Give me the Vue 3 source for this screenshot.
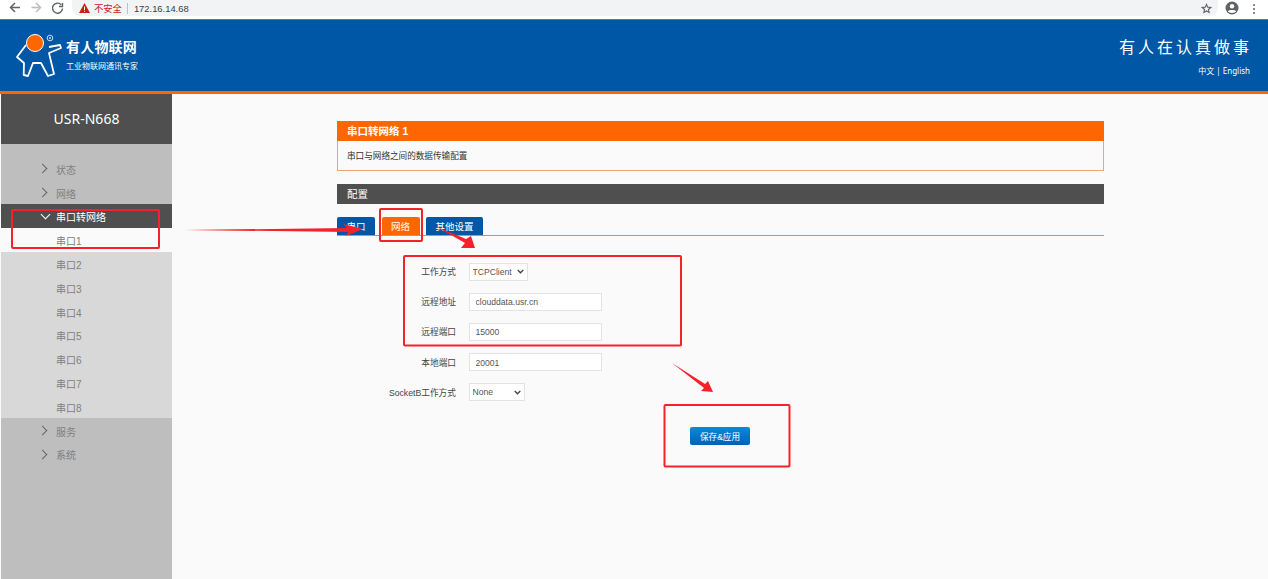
<script setup>
const menuTop = ['状态', '网络']
const ports = ['串口2', '串口3', '串口4', '串口5', '串口6', '串口7', '串口8']
const menuBottom = ['服务', '系统']
</script>

<template>
  <div class="page">
    <!-- browser toolbar -->
    <div class="chrome">
      <svg class="nav" width="72" height="16" viewBox="0 0 72 16" fill="none">
        <path d="M20 7.500H11M15 3L10.500 7.500 15 12" stroke="#5f6368" stroke-width="1.500" />
        <path d="M31.500 7.500h9M36 3L40.500 7.500 36 12" stroke="#b9bcc0" stroke-width="1.500" />
        <path d="M61.200 4.800A5 5 0 1 0 62.500 8.500M62.500 3v3.500h-3.500" stroke="#5f6368" stroke-width="1.400" />
      </svg>
      <div class="omnibox">
        <svg width="11" height="10" viewBox="0 0 11 10"><path d="M5.500 0L11 10H0z" fill="#c5221f" /><path d="M5 3.500h1V7H5zM5 7.800h1v1H5z" fill="#fff" /></svg>
        <span class="unsafe">不安全</span>
        <i class="sep"></i>
        <span class="url">172.16.14.68</span>
        <svg class="star" width="11" height="11" viewBox="0 0 24 24" fill="none"><path d="M12 3l2.700 6.100 6.600.7-5 4.400 1.400 6.500-5.700-3.300-5.700 3.300 1.400-6.500-5-4.400 6.600-.7z" stroke="#5f6368" stroke-width="2.400" /></svg>
      </div>
      <svg class="account" width="14" height="14" viewBox="0 0 14 14"><circle cx="7" cy="7" r="6.500" fill="#5f6368" /><circle cx="7" cy="5.200" r="2.200" fill="#fff" /><path d="M2.800 10.500C4 8.600 10 8.600 11.200 10.500 9.500 12.400 4.500 12.400 2.800 10.500z" fill="#fff" /></svg>
      <div class="dots"><i></i><i></i><i></i></div>
    </div>

    <header class="top">
      <div class="brand">
        <svg class="logo" width="52" height="50" viewBox="0 0 52 50" fill="none">
          <path d="M12 15L3 27l7 6-.3 12 4.300 1 5-13h8l7 13 6-2-5-21 12-5-1-3-11 2" stroke="#fff" stroke-width="1.800" stroke-linejoin="round" />
          <circle cx="21" cy="13" r="8.500" fill="#ff6600" stroke="#fff" stroke-width="1" />
          <circle cx="36" cy="8" r="2.800" stroke="#cfe0f0" stroke-width="1" />
          <circle cx="36" cy="8" r="1" fill="#cfe0f0" />
        </svg>
        <div class="brand-text">
          <div class="brand-name">有人物联网</div>
          <div class="brand-sub">工业物联网通讯专家</div>
        </div>
      </div>
      <div class="slogan">
        <div class="motto">有人在认真做事</div>
        <div class="lang">中文 | English</div>
      </div>
    </header>

    <div class="body">
      <aside class="side">
        <div class="model">USR-N668</div>
        <ul class="menu">
          <li v-for="m in menuTop" :key="m" class="item"><i class="chev"></i>{{ m }}</li>
          <li class="item open"><i class="chev down"></i>串口转网络</li>
          <li class="sub active">串口1</li>
          <li v-for="p in ports" :key="p" class="sub">{{ p }}</li>
          <li v-for="m in menuBottom" :key="m" class="item"><i class="chev"></i>{{ m }}</li>
        </ul>
      </aside>

      <main class="main">
        <section class="notice">
          <h2>串口转网络 1</h2>
          <p>串口与网络之间的数据传输配置</p>
        </section>
        <div class="bar">配置</div>
        <div class="tabs">
          <span class="tab">串口</span>
          <span class="tab on">网络</span>
          <span class="tab">其他设置</span>
        </div>
        <form class="form" @submit.prevent>
          <label>工作方式</label>
          <select class="sel-a"><option>TCPClient</option></select>
          <label>远程地址</label>
          <input value="clouddata.usr.cn" />
          <label>远程端口</label>
          <input value="15000" />
          <label>本地端口</label>
          <input value="20001" />
          <label>SocketB工作方式</label>
          <select class="sel-b"><option>None</option></select>
        </form>
        <div class="actions"><button class="save">保存&amp;应用</button></div>
      </main>
    </div>

    <!-- red annotations drawn on top of the screenshot -->
    <svg class="marks" width="1268" height="579" viewBox="0 0 1268 579" fill="none">
      <g stroke="#f5222a" stroke-width="2">
        <rect x="12" y="210" width="147" height="38" rx="1" />
        <rect x="380" y="209" width="42" height="32" rx="1" />
        <rect x="404" y="256" width="277" height="89.500" rx="1" />
        <rect x="664.500" y="405" width="125" height="61.500" rx="1" />
      </g>
      <g fill="#f5222a">
        <polygon points="184,230 347,228 343,224 363,229 346,236 348,232" />
        <polygon points="437,227 466,239 471,236 475,248 461,248 465,243" />
        <polygon points="672,363 705,384 708,381 713,392 701,391 704,388" />
      </g>
    </svg>
  </div>
</template>

<style scoped>
.page {
  position: relative;
  width: 1268px;
  height: 579px;
  overflow: hidden;
  background: #fafafa;
  font-family: "Liberation Sans", "Noto Sans CJK SC", sans-serif;
  display: flex;
  flex-direction: column;
}
.chrome {
  height: 19px;
  flex: none;
  background: #fff;
  display: flex;
  align-items: flex-start;
}
.nav {
  flex: none;
}
.omnibox {
  width: 1146px;
  height: 16px;
  background: #f1f3f4;
  border-radius: 0 0 8px 8px;
  display: flex;
  align-items: center;
  padding-left: 7px;
  box-sizing: border-box;
}
.unsafe {
  color: #c5221f;
  font-size: 9.300px;
  margin-left: 4px;
}
.sep {
  width: 1px;
  height: 11px;
  background: #bdc1c6;
  margin: 0 6px 0 5px;
}
.url {
  font-size: 9.400px;
  color: #3c4043;
}
.star {
  margin-left: auto;
  margin-right: 6px;
}
.account {
  margin: 1px 0 0 7px;
}
.dots {
  margin: 4px 0 0 14px;
  display: flex;
  flex-direction: column;
  gap: 2px;
}
.dots i {
  width: 2px;
  height: 2px;
  background: #5f6368;
  border-radius: 50%;
}
.top {
  height: 71px;
  flex: none;
  background: #0057a5;
  border-top: 1px solid #3a7fc0;
  border-bottom: 3px solid #ff6600;
  display: flex;
  justify-content: space-between;
  align-items: flex-start;
  color: #fff;
}
.brand {
  display: flex;
  padding: 10px 0 0 14px;
}
.logo {
  flex: none;
}
.brand-text {
  margin-top: 9px;
}
.brand-name {
  font-size: 14px;
  font-weight: 700;
  letter-spacing: 0.200px;
  line-height: 16px;
}
.brand-sub {
  font-size: 8px;
  line-height: 10px;
  margin-top: 6.500px;
}
.slogan {
  text-align: right;
  padding: 19px 18px 0 0;
}
.motto {
  font-size: 16px;
  line-height: 18px;
  letter-spacing: 3px;
  margin-right: -2px;
}
.lang {
  font-family: "Noto Sans", "Noto Sans CJK SC", sans-serif;
  font-size: 8px;
  line-height: 10px;
  margin-top: 9px;
}
.body {
  flex: 1;
  display: flex;
  min-height: 0;
}
.side {
  width: 171px;
  margin-left: 1px;
  flex: none;
  background: #bebebe;
}
.model {
  height: 50px;
  background: #4f4f4f;
  color: #fff;
  font-family: "Noto Sans", sans-serif;
  font-size: 14px;
  line-height: 50px;
  text-align: center;
}
.menu {
  list-style: none;
  margin: 0;
  padding: 12.400px 0 0;
  font-size: 10px;
  color: #808080;
}
.item,
.sub {
  box-sizing: border-box;
  height: 23.800px;
  padding-top: 2px;
  display: flex;
  align-items: center;
  padding-left: 55px;
}
.item {
  position: relative;
}
.sub {
  background: #d8d8d8;
}
.sub.active {
  background: #fafafa;
}
.open {
  background: #4f4f4f;
  color: #fff;
}
.chev {
  position: absolute;
  left: 38px;
  top: 9px;
  width: 6px;
  height: 6px;
  border-top: 1px solid #666;
  border-right: 1px solid #666;
  transform: rotate(45deg);
}
.chev.down {
  left: 41px;
  top: 7px;
  border-color: #fff;
  transform: rotate(135deg);
}
.main {
  width: 767px;
  margin-left: 165px;
  padding-top: 27px;
}
.notice {
  height: 50px;
  box-sizing: border-box;
  border: 1px solid #f7a469;
  border-top: 0;
}
.notice h2 {
  margin: 0 -1px;
  height: 20px;
  line-height: 20px;
  background: #ff6600;
  color: #fff;
  font-size: 10.500px;
  padding-left: 10px;
}
.notice p {
  margin: 0;
  padding-left: 9px;
  font-size: 8.600px;
  line-height: 30px;
  color: #333;
}
.bar {
  margin-top: 13px;
  height: 20px;
  line-height: 20px;
  background: #4f4f4f;
  color: #fff;
  font-size: 10.500px;
  padding-left: 10px;
}
.tabs {
  margin-top: 13px;
  height: 18px;
  display: flex;
  gap: 6.500px;
  border-bottom: 1px solid #7aa7d0;
}
.tab {
  height: 18px;
  padding: 0 9.500px;
  line-height: 19px;
  background: #0057a5;
  color: #fff;
  font-size: 9.500px;
  border-radius: 2px 2px 0 0;
}
.tab.on {
  background: #ff6600;
}
.form {
  display: grid;
  grid-template-columns: 119px 1fr;
  column-gap: 12.500px;
  row-gap: 12.200px;
  align-items: center;
  justify-items: start;
  margin-top: 26.500px;
}
.form label {
  justify-self: end;
  font-size: 8.700px;
  color: #444;
}
.form input,
.form select {
  box-sizing: border-box;
  height: 18px;
  border: 1px solid #e3e3e3;
  background-color: #fff;
  color: #555;
  font-family: inherit;
  font-size: 8.600px;
  outline: none;
}
.form input {
  width: 133px;
  padding: 1px 6px 0;
}
.form select {
  appearance: none;
  border-radius: 0;
  padding: 0 0 0 3px;
  background-image: url("data:image/svg+xml,%3Csvg xmlns='http://www.w3.org/2000/svg' width='7' height='5'%3E%3Cpath d='M.7 1l2.800 2.800L6.300 1' fill='none' stroke='%23444' stroke-width='1.300'/%3E%3C/svg%3E");
  background-repeat: no-repeat;
  background-position: right 3px center;
}
.sel-a {
  width: 59px;
}
.sel-b {
  width: 56px;
}
.actions {
  margin-top: 25.400px;
  padding-left: 353px;
}
.save {
  display: block;
  width: 60px;
  height: 18px;
  padding: 0;
  border: 0;
  border-radius: 2px;
  background: linear-gradient(#0a8ad8, #0060b6);
  color: #fff;
  font-family: inherit;
  font-size: 8.600px;
}
.marks {
  position: absolute;
  left: 0;
  top: 0;
  pointer-events: none;
}
</style>
